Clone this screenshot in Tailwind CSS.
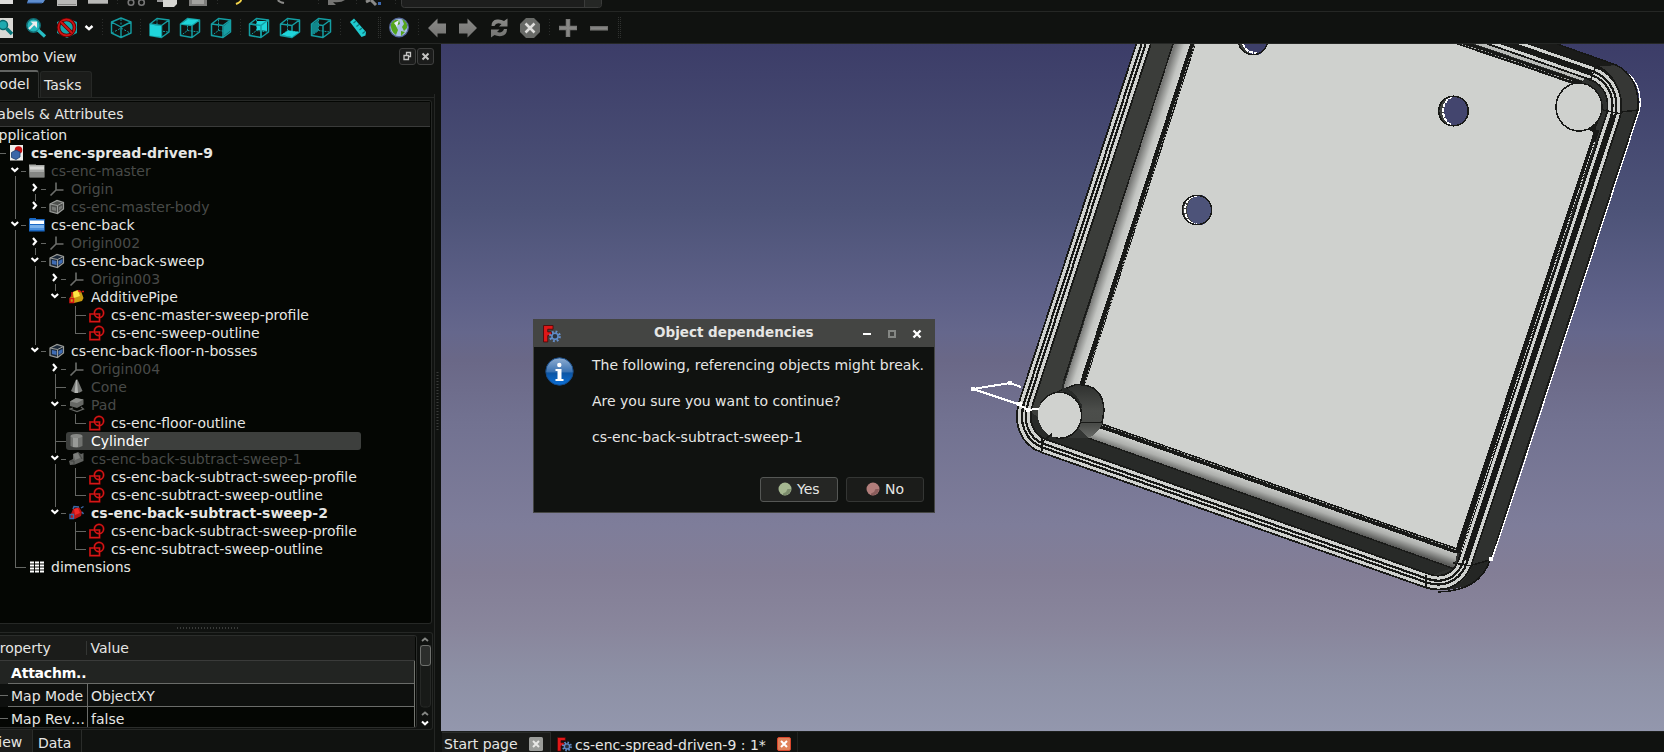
<!DOCTYPE html>
<html lang="en">
<head>
<meta charset="utf-8">
<title>FreeCAD</title>
<script src="https://cdn.jsdelivr.net/npm/@tailwindcss/browser@4"></script>
</head>
<body class="w-[1664px] h-[752px] overflow-hidden bg-[#101210] text-[#e6e6e4] text-[14px] leading-[18px] whitespace-nowrap" style="font-family:'DejaVu Sans',sans-serif">
<div class="flex flex-col w-full h-full">

  <!-- toolbars -->
  <header class="h-[44px] shrink-0 border-b border-[#252725]">
    <svg class="block" width="1664" height="43" viewBox="0 0 1664 43" fill="none">
      <defs>
        <linearGradient id="gy" x1="0" y1="0" x2="0" y2="1"><stop offset="0" stop-color="#8a8a88"/><stop offset="1" stop-color="#747472"/></linearGradient>
        <g id="cube" stroke="#149ea3" stroke-width="1.5" stroke-linejoin="round"><path d="M1 6.5 12.500 8V20L1 18ZM1 6.500 8 1 20 2.500 12.500 8M20 2.500V14.500L12.500 20"/><path d="M8 2V13L1.500 18M8 13 19 14.500" stroke-width="1" stroke-dasharray="2 1"/></g>
      </defs>
      <!-- lower edge of the file toolbar -->
      <path d="M0 0H13V4H0Z" fill="#dededc"/>
      <path d="M28 0H45L43 3H27Z" fill="#5f8fd0"/><path d="M27 3H42" stroke="#2f5b9c"/>
      <rect x="57" y="0" width="20" height="6" fill="#b9b9b7"/><path d="M58 4.500H76" stroke="#858583"/>
      <rect x="88" y="0" width="20" height="4" fill="#b9b9b7"/><path d="M88 3.500H108" stroke="#858583"/>
      <circle cx="131" cy="2.500" r="2.800" stroke="#777" stroke-width="1.600"/><circle cx="141.500" cy="2.500" r="2.800" stroke="#777" stroke-width="1.600"/>
      <path d="M157 0H166V2H157Z" fill="#999"/><path d="M163 0H177V4L174 7H163Z" fill="#d6d6d2"/>
      <rect x="189" y="0" width="18" height="6" fill="#7d7d7b"/><path d="M192 0H204V4H192Z" fill="#a2a29f"/>
      <path d="M236 4Q241 2 241 0" stroke="#f4d54a" stroke-width="2"/><path d="M284 3Q279 2 278 0" stroke="#8a8a88" stroke-width="2"/>
      <path d="M328 0V5H336L333 2Q341 3 345 0Z" fill="#747472"/>
      <path d="M366 2L370 0M371 0 376 5" stroke="#8a8a88" stroke-width="3"/><rect x="378" y="2" width="3" height="3" fill="#3c69b0"/>
      <path d="M401.500 -2V4.500Q401.500 7.500 404.500 7.500H598.500Q601.500 7.500 601.500 4.500V-2" fill="#1d1e1d" stroke="#3a3b3a"/><path d="M584.500 0V7" stroke="#3a3b3a"/><path d="M585 0H601V5L599 7H585Z" fill="#252725"/>
      <path d="M0 11.500H1664" stroke="#252725"/>
      <path d="M117.500 0V5M217.500 0V5M318.500 0V5M356.500 0V5M395.500 0V6M102.500 19V37M140.500 19V37M240.500 19V37M340.500 19V37M418.500 19V37M549.500 19V37" stroke="#2b2d2b" stroke-dasharray="1 2"/>
      <path d="M378.500 17V38M380.500 17V38M618.500 17V38M620.500 17V38" stroke="#303230" stroke-dasharray="1 1"/>
      <!-- view toolbar -->
      <path d="M0 18H13V38H0Z" fill="#d9d9d5"/><circle cx="3" cy="25" r="4.500" fill="#1daab0" stroke="#08686c" stroke-width="1.500"/><path d="M6.500 28.500 12 34" stroke="#08787c" stroke-width="3.500"/>
      <circle cx="33.500" cy="25.500" r="6.700" fill="#24b6bb" stroke="#116e75" stroke-width="1.500"/><path d="M38 30 45 36.500" stroke="#26bec4" stroke-width="3.200"/><path d="M29 29 35 23" stroke="#e9e9e9" stroke-width="2.200"/><path d="M30.500 21.500H37V28Z" fill="#eee"/>
      <path d="M67 18 77 22V33L67 38 57 33V22Z" fill="#16a6ab"/><circle cx="66.500" cy="27.500" r="8" stroke="#5a0000" stroke-width="3.600"/><circle cx="66.500" cy="27.500" r="8" stroke="#d01414" stroke-width="1.800"/><path d="M61 22 72 33" stroke="#5a0000" stroke-width="3.600"/><path d="M61 22 72 33" stroke="#d01414" stroke-width="2"/>
      <path d="M85.500 26 89 29.200 92.500 26" stroke="#fff" stroke-width="2.400"/>
      <g stroke="#149ea3" stroke-width="1.400" stroke-linejoin="round"><path d="M121 18 131 22V33L121 37.500 111.500 33V22ZM111.500 22 121 27 131 22M121 27V37"/><path d="M121 19V27M112 33 121 28 130 33" stroke-dasharray="2 1.500" stroke-width="1"/></g>
      <use href="#cube" x="149" y="17.500"/><path d="M150 24.500 161 26V37L150 35.500Z" fill="#1fd5da"/>
      <use href="#cube" x="179.500" y="17.500"/><path d="M181 24 188 19 199 20 192 25Z" fill="#1fd5da"/>
      <use href="#cube" x="210.500" y="17.500"/><path d="M223.500 26 230 21V31L223.500 36.500Z" fill="#169ea3"/>
      <use href="#cube" x="248.500" y="17.500"/><path d="M257 21H267V31L257 30Z" fill="#1fd5da"/><path d="M249.500 24 261 25.500V37M261 25.500 268 20" stroke="#149ea3" stroke-width="1.500"/>
      <use href="#cube" x="279.500" y="17.500"/><path d="M281 35 288 30.500 299 32 292 37Z" fill="#1fd5da"/>
      <use href="#cube" x="310.500" y="17.500"/><path d="M312 24.500 318 20V31L312 35Z" fill="#11878b"/>
      <path d="M350 22 354 18.500 366 32 365.500 35.500 361.500 37Z" fill="#20cbd0"/><path d="M356 21 353.500 23M359 24.500 356.500 26.500M362 28 359.500 30M365 31.500 362.500 33.500" stroke="#0b777b" stroke-width="1.300"/>
      <circle cx="399" cy="27.500" r="9.300" fill="#a9c0e6" stroke="#55689a" stroke-width="1.300"/><path d="M391 24Q394 19 399 20L400 24 396 26 398 30 396 35Q390 31 391 24ZM402 19Q408 22 407 28L404 31 402 27 404 24ZM401 31 405 32 401 36Z" fill="#55a51c"/><path d="M394 23 399 20 397 27Z" fill="#e9f1f8"/>
      <path d="M428 28 437.500 18.500V23.500H446V33.500H437.500V37.500Z" fill="url(#gy)"/>
      <path d="M477 28 467.500 18.500V23.500H459V33.500H467.500V37.500Z" fill="url(#gy)"/>
      <path d="M491.500 26Q491.500 20 497 19.500Q501 19 504 21L507.500 18.500V26.500H499L501.500 24Q496 22 494.500 26ZM507 29Q507 35 501.500 36Q497.500 36.500 494.500 35L491 37.500V29.500H499.500L497 32Q502.500 33.500 504 29Z" fill="url(#gy)"/>
      <path d="M526 18H534L540 24V32L534 38H526L520 32V24Z" fill="#686a67"/><path d="M525.500 23.500 534.500 32.500M534.500 23.500 525.500 32.500" stroke="#dededc" stroke-width="2.500"/>
      <path d="M568 19V37M559 28H577" stroke="#7a7a78" stroke-width="4.500"/><path d="M590 28.300H608" stroke="#737371" stroke-width="4.500"/><path d="M591 28.300H607M560 28H576M568 20V36" stroke="#878785" stroke-width="2"/>
    </svg>
  </header>

  <div class="flex flex-1 min-h-0">
    <!-- combo view -->
    <aside class="relative w-[441px] shrink-0 flex flex-col">
      <div class="flex items-center h-[26px] pr-[7px]">
        <span class="flex-1 -ml-[10.500px]">Combo View</span>
        <svg width="35" height="17" viewBox="0 0 35 17" fill="none"><rect x=".5" y=".5" width="16" height="16" rx="2.500" fill="#1b1c1b" stroke="#3e3f3e"/><rect x="18.500" y=".5" width="16" height="16" rx="2.500" fill="#1b1c1b" stroke="#3e3f3e"/><path d="M7.500 7V4.500H11.500V8.500H10M5 7.500H9.500V11.500H5Z" stroke="#c4c4c2" stroke-width="1.300"/><path d="M23.500 5.500 29.500 11.500M29.500 5.500 23.500 11.500" stroke="#c4c4c2" stroke-width="2"/></svg>
      </div>
      <div class="flex h-[28px] items-end border-b border-[#252725] w-[434px]">
        <div class="w-[39px] h-[28px] rounded-tr-[3px] border-t-2 border-r border-t-[#626462] border-r-[#303230] pt-[3px] mb-[-1px] bg-[#101210]"><span class="-ml-[12.500px]">Model</span></div>
        <div class="w-[52px] h-[26px] ml-[1px] rounded-t-[3px] border border-b-0 border-[#262826] bg-[#1b1c1a] pt-[4px] pl-[3px]">Tasks</div>
      </div>
      <div class="h-[527px] w-[432px] mt-[2px] border-t border-r border-b border-[#262826] rounded-r-[3px] bg-[#040603] relative">
        <div class="mt-[1px] h-[25px] w-[430px] bg-[#1b1c1a] border-b border-[#3a3b3a] pt-[3.500px]"><span class="-ml-[10.500px]">Labels &amp; Attributes</span></div>
        <div id="tree"></div>
      </div>
      <div class="h-[8px] flex items-center pl-[177px]"><div class="w-[62px] h-[2px] bg-[repeating-linear-gradient(90deg,#3a3c3a_0_1px,transparent_1px_3px)]"></div></div>
      <div class="flex h-[98px] w-[433px] border border-l-0 border-[#252725] rounded-r-[3px]">
        <div class="w-[417px] h-[93px] mt-[2px] border border-l-0 border-[#2b2d2b] rounded-r-[3px] bg-[#040603] overflow-hidden">
          <div class="h-[25px] w-[415px] bg-[#1b1c1a] border-b border-[#3a3b3a] flex items-center">
            <span class="-ml-[8.500px] w-[95px] border-r border-[#343634] h-[14px] leading-[14px]">Property</span><span class="pl-[4px]">Value</span>
          </div>
          <div class="w-[415px] h-[23px] border-r border-[#72746f] bg-[#222422] flex"><span class="w-[8px]"></span><b class="flex-1 h-[23px] border-b border-[#6a6c69] pl-[3px] pt-[3px] text-white tracking-[-0.200px]">Attachm..</b></div>
          <div class="w-[415px] h-[23px] border-r border-[#72746f] bg-[#0e100e] flex"><i class="w-[8px] h-[1px] mt-[11px] bg-[#6a6c69]"></i><span class="w-[80px] h-[23px] border-b border-r border-[#6a6c69] pl-[3px] pt-[3px]">Map Mode</span><span class="flex-1 border-b border-[#6a6c69] pl-[3px] pt-[3px]">ObjectXY</span></div>
          <div class="w-[415px] h-[20px] border-r border-[#72746f] flex"><i class="w-[8px] h-[1px] mt-[11px] bg-[#6a6c69]"></i><span class="w-[80px] border-r border-[#6a6c69] pl-[3px] pt-[3px]">Map Rev…</span><span class="pl-[3px] pt-[3px]">false</span></div>
        </div>
        <svg width="15" height="96" viewBox="417 633 15 96" fill="none"><path d="M420.500 645V704Q420.500 707 423.500 707H427.500Q430.500 707 430.500 704V645" fill="#181a18" stroke="#262826"/><rect x="420.500" y="645.500" width="10" height="20" rx="2.500" fill="#2c2e2c" stroke="#6e706d"/><path d="M422 641 425 638.500 428 641M422 715 425 712.500 428 715" stroke="#858784" stroke-width="1.800"/><path d="M422 721.500 425 724.300 428 721.500" stroke="#fff" stroke-width="2"/></svg>
      </div>
      <div class="flex h-[22px]">
        <div class="w-[33px] border-r border-[#2a2c2a] bg-[#1b1c1a] pt-[3px]"><span class="-ml-[11px]">View</span></div>
        <div class="w-[49px] border-r border-[#2a2c2a] pl-[5px] pt-[4px]">Data</div>
      </div>
      <svg class="absolute left-[433px] top-[50px]" width="8" height="658" fill="none"><path d="M1.500 0V658" stroke="#242624"/><path d="M4.500 278V338" stroke="#3a3c3a" stroke-width="2" stroke-dasharray="1 2"/></svg>
    </aside>

    <!-- document area -->
    <main class="relative flex-1 flex flex-col">
      <svg class="block" width="1223" height="687" viewBox="441 44 1223 687" fill="none">
        <defs>
          <linearGradient id="sky" x1="0" y1="0" x2="0" y2="1"><stop offset="0" stop-color="#3c3d68"/><stop offset=".24" stop-color="#4d5378"/><stop offset=".37" stop-color="#5e6188"/><stop offset=".42" stop-color="#65678c"/><stop offset=".46" stop-color="#6a6887"/><stop offset=".55" stop-color="#727291"/><stop offset=".7" stop-color="#7e7d9a"/><stop offset=".77" stop-color="#837e96"/><stop offset=".85" stop-color="#89869c"/><stop offset=".92" stop-color="#8d90a5"/><stop offset="1" stop-color="#9397ad"/></linearGradient>
          <linearGradient id="lf" gradientUnits="userSpaceOnUse" x1="1111" y1="240" x2="1125" y2="244.600"><stop offset="0" stop-color="#777876"/><stop offset=".6" stop-color="#c2c4c1"/><stop offset="1" stop-color="#d0d2cf"/></linearGradient>
          <linearGradient id="bf" gradientUnits="userSpaceOnUse" x1="1240" y1="493" x2="1245.500" y2="477"><stop offset="0" stop-color="#5b5c5a"/><stop offset=".5" stop-color="#aeb0ad"/><stop offset="1" stop-color="#d0d2cf"/></linearGradient>
          <linearGradient id="cy" x1="0" y1="0" x2="0" y2="1"><stop offset="0" stop-color="#2e302e"/><stop offset=".5" stop-color="#4c4e4b"/><stop offset=".75" stop-color="#4a4c49"/><stop offset="1" stop-color="#6a6c69"/></linearGradient>
          <path id="rim" d="M1153 15 1027 400C1019 422 1027 440 1044 446L1428 581C1448 587 1461 575 1465.500 561L1572.500 240 1613.500 115C1617 96 1610 80 1592 73L1480 34"/>
        </defs>
        <rect x="441" y="44" width="1223" height="687" fill="url(#sky)"/>
        <g shape-rendering="crispEdges">
          <!-- outer side faces -->
          <path d="M1142 24 1019 400Q1008 437 1040 452L1427 588Q1440 594 1468 584 1483 576 1491 558L1516 480 1597 240 1638 110Q1642 78 1612 64L1540 38Z" fill="#2f312f"/>
          <path d="M1532 44H1557L1616 65 1597 67Z" fill="#1a1b19"/>
          <path d="M1597 66 1616 66Q1640 76 1639 108L1621 114Q1621 78 1597 66Z" fill="#363735"/>
          <path d="M1472 566 1489 561Q1480 590 1440 590Q1466 586 1472 566Z" fill="#242624"/>
          <path d="M1638 110 1516.500 480 1491 560" stroke="#1a1b19" stroke-width="2"/>
          <path d="M1629 74Q1643 88 1639.500 110L1518.500 480 1492 559" stroke="#fff" stroke-width="1.300"/>
          <path d="M1597 66Q1621 76 1621 112L1638 110M1557 44 1616 65Q1640 77 1638 110M1472 565 1490 560Q1480 591 1438 592" stroke="#151614" stroke-width="1.500"/>
          <!-- inner walls -->
          <path d="M1150 44H1173L1064 378 1028 410 1034 398Z" fill="#3b3d3a"/>
          <path d="M1028 400 1064 378 1088 438 1452 568 1427 577 1041 440Q1028 430 1028 400Z" fill="#282a28"/>
          <path d="M1028 410 1034 390 1064 378 1060 395 1042 420Z" fill="#3b3d3a"/>
          <path d="M1173 44H1192L1083 388 1062 392Z" fill="url(#lf)"/>
          <path d="M1173 44 1064 380" stroke="#1a1b19" stroke-width="1.500"/>
          <path d="M1088 438 1102 424 1458 549 1454 568Z" fill="url(#bf)"/>
          <path d="M1088 438 1452 568" stroke="#1a1b19" stroke-width="1.500"/>
          <!-- floor -->
          <path d="M1193 44H1460L1572 84 1600 105 1590 145 1459 550 1082 419V384Z" fill="#cfd1ce"/>
          <path d="M1193 44 1081 388" stroke="#181917" stroke-width="5.500"/><path d="M1194.500 44 1083 388" stroke="#a9aba8" stroke-width="1" stroke-dasharray="1.500 2"/>
          <path d="M1096 424 1457 551" stroke="#181917" stroke-width="5.500"/><path d="M1098 423.500 1457 550" stroke="#a9aba8" stroke-width="1" stroke-dasharray="1.500 2"/>
          <path d="M1458 42 1582 84" stroke="#181917" stroke-width="5.500"/><path d="M1458 42.500 1572 81" stroke="#a9aba8" stroke-width="1" stroke-dasharray="1.500 2"/>
          <path d="M1472 41 1584 79" stroke="#b9bbb8" stroke-width="4"/>
          <path d="M1597 130 1457 553" stroke="#181917" stroke-width="5"/>
          <!-- rim -->
          <g stroke="#181917" stroke-width="15.500"><use href="#rim"/></g>
          <g stroke="#cfd1ce" stroke-width="12"><use href="#rim"/></g>
          <g stroke="#181917" stroke-width="6"><use href="#rim"/></g>
          <g stroke="#cfd1ce" stroke-width="1.600"><use href="#rim"/></g>
          <path d="M1594.500 142 1461 553" stroke="#cfd1ce" stroke-width="1" stroke-dasharray="2 1"/>
          <path d="M1572.500 240 1466 560M1613.500 115 1572.500 240M1592 73 1480 34" stroke="#181917" stroke-width="2.500"/>
          <path d="M1042 438V451M1426 575V588M1453 563 1472 566M1603 110 1621 114M1590 81 1596 66" stroke="#181917" stroke-width="1.500"/>
          <!-- lower-left boss -->
          <path d="M1057 392 1078 384A25 24 0 0 1 1104 408Q1106 430 1088 438H1062Z" fill="url(#cy)"/>
          <path d="M1060 438 1088 438 1076 425Z" fill="#343634"/>
          <path d="M1057 392 1076 384.500Q1103 384 1104 410L1102 423M1080 422.500H1102" stroke="#181917" stroke-width="1.500"/>
          <path d="M1062 389Q1074 392 1081 408" stroke="#282a28" stroke-width="4"/>
          <ellipse cx="1060" cy="415" rx="22" ry="23" fill="#d0d2cf"/><path d="M1041 403A22 23 0 1 1 1056 438" stroke="#181917" stroke-width="1.500"/>
          <path d="M1042 442 1052 434" stroke="#181917" stroke-width="2"/>
          <!-- upper-right boss -->
          <ellipse cx="1579" cy="107" rx="23" ry="24" fill="#cfd1ce" stroke="#181917" stroke-width="1.500"/>
          <path d="M1588 129 1599 120 1594 133Z" fill="#181917"/>
          <!-- screw holes -->
          <circle cx="1197" cy="210" r="15" fill="#3f413e"/><ellipse cx="1199.500" cy="210" rx="12.500" ry="15" fill="#4d5379"/><path d="M1197 195.500A12 14.500 0 0 0 1197 224.500" stroke="#fff" stroke-width="2" stroke-dasharray="4 1"/><circle cx="1197" cy="210" r="14.700" stroke="#181917" stroke-width="1.500"/>
          <circle cx="1453.500" cy="111" r="15" fill="#3f413e"/><ellipse cx="1456" cy="111" rx="12.500" ry="15" fill="#43456e"/><path d="M1452 97A12 14.500 0 0 0 1452 125" stroke="#fff" stroke-width="2" stroke-dasharray="4 1"/><circle cx="1453.500" cy="111" r="14.800" stroke="#181917" stroke-width="1.500"/>
          <circle cx="1253" cy="40" r="15" fill="#3f413e"/><ellipse cx="1255.500" cy="40" rx="12.500" ry="15" fill="#3d3f69"/><path d="M1243 44Q1246 53 1257 53" stroke="#fff" stroke-width="2" stroke-dasharray="4 1"/><circle cx="1253" cy="40" r="14.700" stroke="#181917" stroke-width="1.500"/>
          <!-- sketch wire -->
          <path d="M1021 387 1010 383 973 389 1018 404 1028 410 1039 408.500" stroke="#fff" stroke-width="2"/><path d="M971 387H975V391H971ZM1008 381H1012V385H1008ZM1026 408H1030V412H1026ZM1017 402H1022V406H1017ZM1489 557H1493V561H1489Z" fill="#fff"/>
        </g>
      </svg>
      <div class="flex h-[21px] border-t border-[#1d1f1d]">
        <div class="w-[109px] ml-[1px] border-t border-r border-[#292b29] bg-[#191a18] pl-[2px] pt-[2px] flex gap-[11px]">Start page
          <svg class="mt-[2px]" width="14" height="14"><rect width="14" height="14" rx="1.500" fill="#9b9d9a"/><path d="M4 4 10 10M10 4 4 10" stroke="#e8e8e6" stroke-width="2"/></svg></div>
        <div class="w-[247px] border-r border-[#1f211f] pl-[6px] pt-[4px] flex">
          <svg class="mt-[1px] mr-[3px]" width="15" height="15" viewBox="0 0 17 17"><use href="#fc"/></svg>
          <span>cs-enc-spread-driven-9 : 1*</span>
          <svg class="mt-[1px] ml-[11px]" width="14" height="14"><rect x=".5" y=".5" width="13" height="13" rx="1.500" fill="#e0825a" stroke="#d8462c"/><path d="M4 4 10 10M10 4 4 10" stroke="#fff" stroke-width="2"/></svg>
        </div>
      </div>

      <!-- dialog -->
      <section class="absolute left-[92px] top-[275px] w-[402px] h-[194px] bg-[#101210] border border-[#444543] flex flex-col">
        <div class="h-[27px] shrink-0 bg-[#444543] flex items-center pl-[9px] pr-[12px]">
          <svg width="18" height="18" viewBox="0 0 17 17"><g id="fc"><path d="M.5 .5H9.500V4H4.500V6.500H8V10H4.500V16H.5Z" fill="#e01818" stroke="#4a0808" stroke-width=".8"/><circle cx="11.300" cy="10.700" r="4.300" stroke="#6590cc" stroke-width="2.600" stroke-dasharray="1.600 1.780" fill="none"/><circle cx="11.300" cy="10.700" r="2.900" stroke="#5f8ac6" stroke-width="1.500" fill="#2c333c"/></g></svg>
          <b class="ml-[93px] flex-1 -mt-[3px] text-[13.500px]">Object dependencies</b>
          <svg width="60" height="12" viewBox="0 0 60 12" fill="none"><path d="M1 6H9" stroke="#fff" stroke-width="2"/><rect x="27" y="3" width="6" height="6" stroke="#858784" stroke-width="2"/><path d="M51.500 2.500 58.500 9.500M58.500 2.500 51.500 9.500" stroke="#fff" stroke-width="2.400"/></svg>
        </div>
        <div class="flex flex-1 pl-[11px]">
          <svg class="mt-[10px]" width="29" height="29" viewBox="0 0 29 29"><defs><linearGradient id="inf" x1="0" y1="0" x2="0" y2="1"><stop offset="0" stop-color="#8fadd0"/><stop offset=".5" stop-color="#3c74b4"/><stop offset=".56" stop-color="#0c55a4"/><stop offset="1" stop-color="#0b6fd6"/></linearGradient></defs><circle cx="14.500" cy="14.500" r="13.700" fill="url(#inf)" stroke="#164a86"/><circle cx="14.300" cy="8" r="2.200" fill="#fff"/><path d="M10.500 12H16.500V22H18.500V24H10.500V22H12.500V14H10.500Z" fill="#fff"/></svg>
          <div class="ml-[18px] mt-[9px] flex flex-col gap-[18px]"><p class="tracking-[0.025px]">The following, referencing objects might break.</p><p>Are you sure you want to continue?</p><p>cs-enc-back-subtract-sweep-1</p></div>
        </div>
        <div class="flex justify-end gap-[8px] pr-[10px] pb-[10px]">
          <div class="w-[78px] h-[25px] rounded-[3px] border border-[#555755] bg-[#252624] flex items-center pl-[17px] gap-[5px]"><svg class="-mt-[1px]" width="14" height="14"><circle cx="7" cy="7" r="6.500" fill="#a5b790"/><path d="M5 11.500 8 10 9.500 7 13 7A6.500 6.500 0 0 1 5 13Z" fill="#7c8c6c"/></svg><span class="-mt-[1px]">Yes</span></div>
          <div class="w-[78px] h-[25px] rounded-[3px] border border-[#343634] bg-[#1b1c1a] flex items-center pl-[19px] gap-[5px]"><svg class="-mt-[1px]" width="14" height="14"><circle cx="7" cy="7" r="6.500" fill="#b27e7b"/><path d="M5 11.500 8 10 9.500 7 13 7A6.500 6.500 0 0 1 5 13Z" fill="#8a5c5b"/></svg><span class="-mt-[1px]">No</span></div>
        </div>
      </section>
    </main>
  </div>
</div>

<script>
const icons = {
  doc: '<path d="M1 0H14V15.500H1Z" fill="#eeeeec"/><circle cx="9.500" cy="5" r="3.800" fill="#c81414"/><path d="M2.500 7.500 7 5 11 7V12L7 14.500 2.500 12.500Z" fill="#3b67a8" stroke="#1d3c6c" stroke-width=".8"/>',
  fgray: '<path d="M0 3V1.500H7V2H15.500V14.500H.5Z" fill="#a9aba8"/><path d="M1 3.500H15V6.500H1Z" fill="#d6d6d4"/><path d="M1 9H15V14H1Z" fill="#858784"/>',
  fblue: '<path d="M1 1H7V2H15.700V14.500H0V2Z" fill="#1a68c4"/><path d="M1 3.500H15V7H1Z" fill="#fff"/><path d="M1 8H15V11H1Z" fill="#79b0ea"/><path d="M1 11H15V13H1Z" fill="#4b8fdb"/>',
  origin: '<path d="M7 1.500V9H14.500M7 9 1.500 14.500" stroke="#6c6e6b" stroke-width="1.600" fill="none"/>',
  bgray: '<path d="M1 5 8 1.500 14.500 3.500V10L8.500 14.500 1 12.500Z" fill="#4d4f4c" stroke="#9a9c99" stroke-width="1.200"/><path d="M1 5 8.500 6.500 14.500 3.500M8.500 6.500V14" stroke="#9a9c99" fill="none"/><path d="M3 7.500 7 8.500V12L3 11ZM10 8 13 6.500V9L10 11.500Z" fill="#777976"/>',
  bblue: '<path d="M1 5 8 1.500 14.500 3.500V10L8.500 14.500 1 12.500Z" fill="#1b2838" stroke="#9a9c99" stroke-width="1.200"/><path d="M1 5 8.500 6.500 14.500 3.500M8.500 6.500V14" stroke="#9a9c99" fill="none"/><path d="M3 7 7.500 8V12L3 11ZM9.500 8 13.500 6V9.500L9.500 12Z" fill="#3f6cb4"/>',
  pipe: '<path d="M4 3 8 1 12 2 14.500 9 13 12 5 14 1 13 1 9Z" fill="#c99c10"/><path d="M4 3 9 1.500 11 7 5 9Z" fill="#ffe646"/><path d="M1 9.500H4.500V13.500H1ZM3 3V8M9 1.500 12 3M13 2.500H15" stroke="#d41616" stroke-width="1.500" fill="none"/>',
  pred: '<path d="M4 4 10 2 13 7 12 11 6 14 2 13 2 9Z" fill="#b81414"/><path d="M5 4 9 3 11 8 6 10Z" fill="#f02828"/><path d="M4 4 5 1.500 10 2M1 9.500H4.500V13.500H1ZM12 3 14.500 1.500M13 7 14.500 9" stroke="#3d68a8" stroke-width="1.400" fill="none"/>',
  pgray: '<path d="M4 3 9 1 12 3 14.500 2V10L6 13.500 1 14 0 10 4 8Z" fill="#60625f"/><path d="M4.500 3 9 2 11 7 6 9Z" fill="#7d7f7c"/><path d="M1.500 10H5V13M10 2 13 8" stroke="#414340" fill="none"/>',
  sketch: '<path d="M1 7H10.500V14.700H1Z" stroke="#760505" stroke-width="2.200" fill="none"/><circle cx="10" cy="6" r="4.600" stroke="#760505" stroke-width="2.200" fill="none"/><path d="M1 7H10.500V14.700H1Z" stroke="#d41818" stroke-width="1.200" fill="none"/><circle cx="10" cy="6" r="4.600" stroke="#d41818" stroke-width="1.200" fill="none"/>',
  cone: '<path d="M7 .5H8.500L13.500 12Q8 16 2 12Z" fill="#747673"/><path d="M7 1H8L9 14H5.500Z" fill="#b3b5b2"/>',
  pad: '<path d="M1 4.500 7 1 14.500 2.500V7.500L8 11 1 9Z" fill="#666865"/><path d="M1 4.500 7 1 14.500 2.500 8 6Z" fill="#8a8c89"/><path d="M4 11 1 12 8 14.500 14.500 12 12 10" stroke="#666865" stroke-width="1.200" fill="none"/>',
  cyl: '<path d="M1.500 3Q7 -.5 13.500 3V13Q7 16.500 1.500 13Z" fill="#70726f"/><path d="M4 4H9V14H4Z" fill="#989a97"/><ellipse cx="7.500" cy="3" rx="6" ry="2" fill="#868885"/>',
  sheet: '<path d="M1 3.500H15M1 6.500H15M1 9.500H15M1 12.500H15" stroke="#fff" stroke-width="2" stroke-dasharray="4 1"/>'
};
// [depth, icon, label, style, expander]
const rows = [
  [1,'doc','cs-enc-spread-driven-9','b',''],
  [2,'fgray','cs-enc-master','d','v'],
  [3,'origin','Origin','d','r'],
  [3,'bgray','cs-enc-master-body','d','r'],
  [2,'fblue','cs-enc-back','','v'],
  [3,'origin','Origin002','d','r'],
  [3,'bblue','cs-enc-back-sweep','','v'],
  [4,'origin','Origin003','d','r'],
  [4,'pipe','AdditivePipe','','v'],
  [5,'sketch','cs-enc-master-sweep-profile','',''],
  [5,'sketch','cs-enc-sweep-outline','',''],
  [3,'bblue','cs-enc-back-floor-n-bosses','','v'],
  [4,'origin','Origin004','d','r'],
  [4,'cone','Cone','d',''],
  [4,'pad','Pad','d','v'],
  [5,'sketch','cs-enc-floor-outline','',''],
  [4,'cyl','Cylinder','s',''],
  [4,'pgray','cs-enc-back-subtract-sweep-1','d','v'],
  [5,'sketch','cs-enc-back-subtract-sweep-profile','',''],
  [5,'sketch','cs-enc-subtract-sweep-outline','',''],
  [4,'pred','cs-enc-back-subtract-sweep-2','b','v'],
  [5,'sketch','cs-enc-back-subtract-sweep-profile','',''],
  [5,'sketch','cs-enc-subtract-sweep-outline','',''],
  [2,'sheet','dimensions','','']
];
const tone = { b:'font-bold', d:'text-[#484a48]', s:'text-white', '':'' };
let html = '<div class="h-[18px] mt-[-1px]"><span class="-ml-[11px]">Application</span></div>';
let over = '<path d="M0 27.500H6M15.500 40V441.500H26M35.500 58V81M35.500 112V225M55.500 148V171M75.500 180V207.500M55.500 238V387M75.500 288V297.500M75.500 342V369.500M75.500 396V423.500" stroke="#646663" fill="none"/>';
rows.forEach(([d, ic, t, s, e], i) => {
  const x = (d - 1) * 20 - 5, y = (i + 1) * 18 + 9;
  const sel = s === 's' ? '<div class="absolute left-[66px] w-[295px] h-[18px] rounded-[3px] bg-[#3d3f3d]"></div>' : '';
  html += `<div class="h-[18px] flex items-center relative" style="padding-left:${d === 1 ? 9 : x + 14}px">${sel}<svg class="relative mr-[6px]" width="16" height="16" fill="none">${icons[ic]}</svg><span class="relative ${tone[s]}">${t}</span></div>`;
  if (d > 1) {
    over += `<path d="M${e ? x + 6 : x} ${y + .5}H${x + 11}" stroke="#646663"/>`;
    if (e) over += `<rect x="${x - 3}" y="${y - 6}" width="7" height="11" fill="#040603"/>`;
    if (e === 'v') over += `<path d="M${x - 3.500} ${y - 3}L${x - .2} ${y}L${x + 3.100} ${y - 3}" stroke="#fff" stroke-width="2.200" fill="none"/>`;
    if (e === 'r') over += `<path d="M${x - 2} ${y - 5}L${x + 1} ${y - 1.500}L${x - 2} ${y + 2}" stroke="#fff" stroke-width="2.200" fill="none"/>`;
  }
});
document.getElementById('tree').innerHTML = `<div class="relative">${html}<svg class="absolute left-0 top-0" width="120" height="460">${over}</svg></div>`;
</script>
</body>
</html>
